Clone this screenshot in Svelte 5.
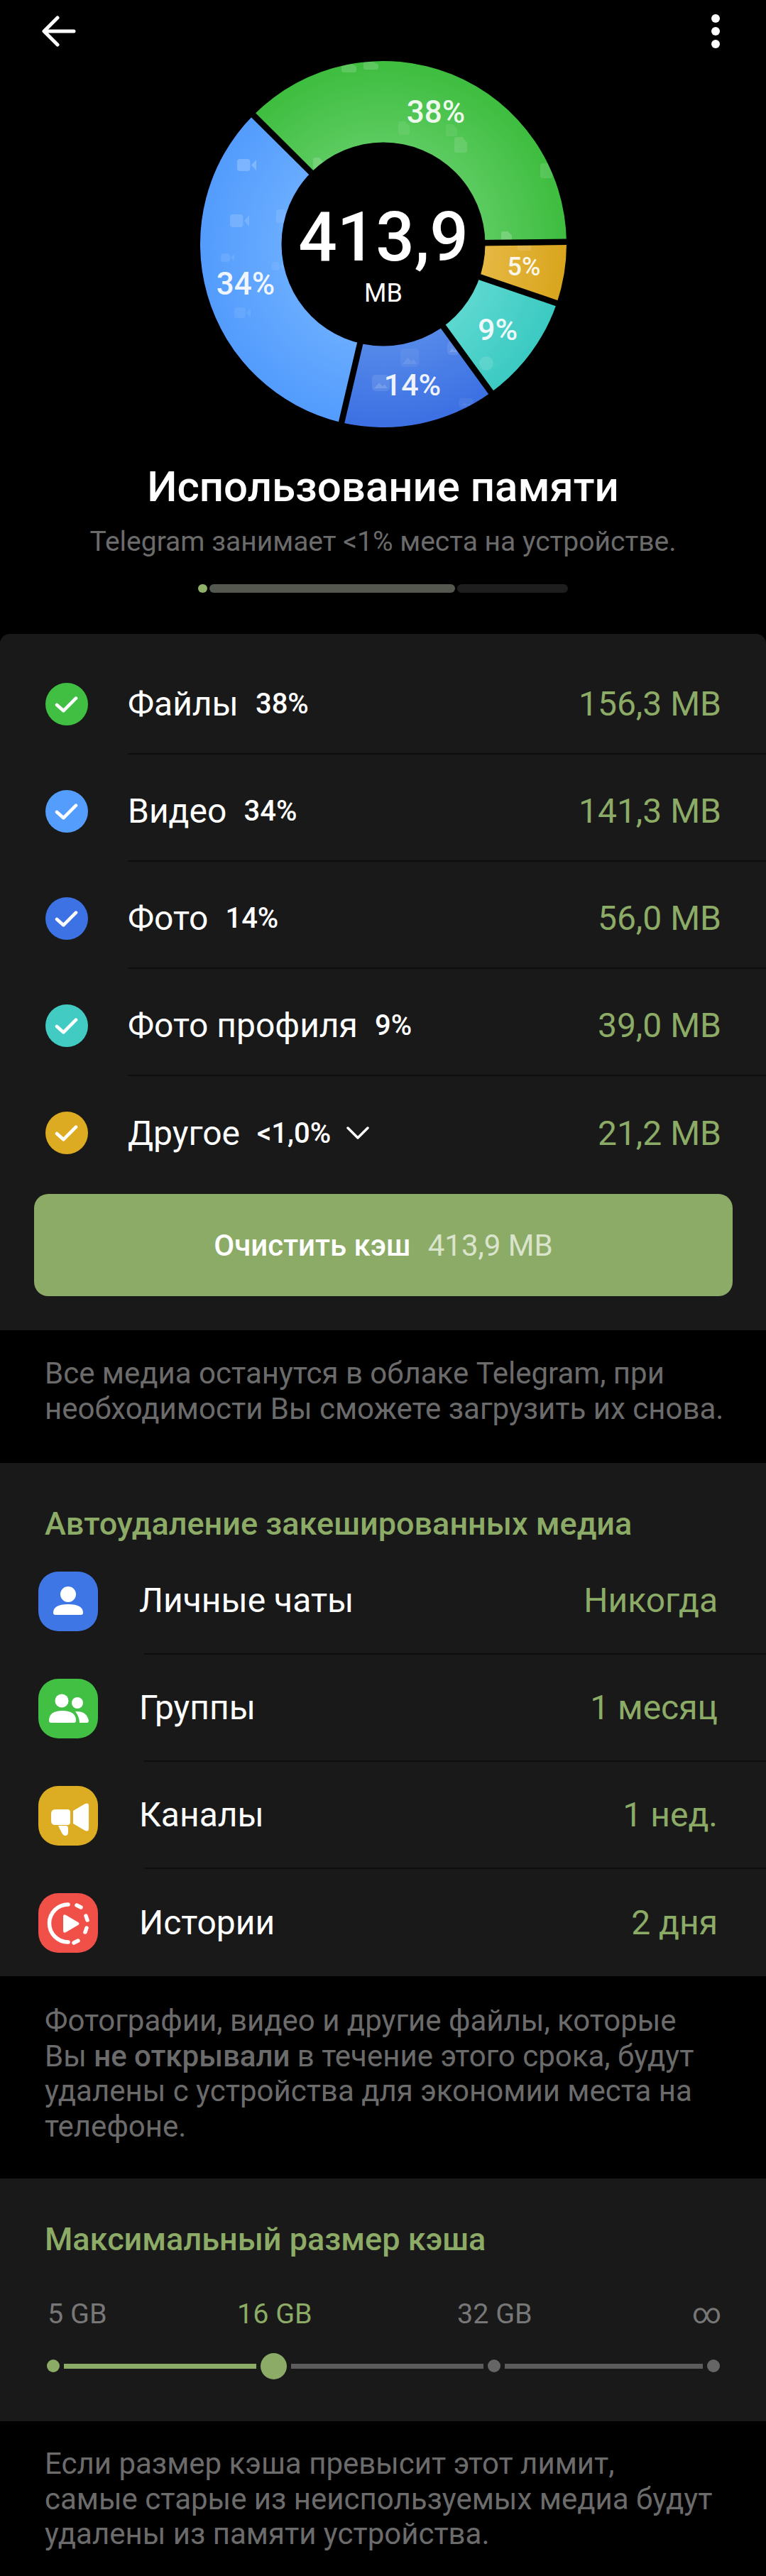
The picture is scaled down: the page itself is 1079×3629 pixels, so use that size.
<script>
  const cx = 258, cy = 258, R = 258, r = 143.5

  function pt(deg, rad) {
    const a = (deg - 90) * Math.PI / 180
    return [cx + rad * Math.cos(a), cy + rad * Math.sin(a)]
  }

  function sector(from, to) {
    const [x1, y1] = pt(from, R)
    const [x2, y2] = pt(to, R)
    const big = to - from > 180 ? 1 : 0
    return `M${cx} ${cy}L${x1} ${y1}A${R} ${R} 0 ${big} 1 ${x2} ${y2}Z`
  }

  // angles read off the reference, clockwise from 12 o'clock
  const segments = [
    { id: 'green', from: -45.2, to: 89.3 },
    { id: 'gold', from: 89.3, to: 108.8 },
    { id: 'teal', from: 108.8, to: 144 },
    { id: 'photo', from: 144, to: 193.2 },
    { id: 'blue', from: 193.2, to: 314.8 }
  ]

  const gradients = [
    { id: 'green', inner: '#5ccb60', outer: '#3ebd3f' },
    { id: 'gold', inner: '#e6b944', outer: '#d9a51d' },
    { id: 'teal', inner: '#5dd8d0', outer: '#3bcac2' },
    { id: 'photo', inner: '#5589e9', outer: '#3c70e3' },
    { id: 'blue', inner: '#69acff', outer: '#539cfd' }
  ]

  const labels = [
    { text: '38%', x: 332, y: 75, size: 44 },
    { text: '5%', x: 456, y: 292, size: 36 },
    { text: '9%', x: 419, y: 382, size: 43 },
    { text: '14%', x: 299, y: 460, size: 43 },
    { text: '34%', x: 64, y: 317, size: 44 }
  ]

  // faint watermarks: x, y, width, height, opacity
  const videos = [
    [52, 138, 27, 17, 0.22], [42, 216, 27, 18, 0.16], [29, 271, 19, 12, 0.1],
    [48, 347, 23, 15, 0.08], [107, 209, 20, 19, 0.1], [101, 283, 16, 12, 0.08]
  ]
  const docs = [
    [358, 107, 18, 22, 0.12], [424, 240, 15, 16, 0.2], [159, 136, 14, 16, 0.16],
    [479, 144, 17, 21, 0.12], [279, 85, 16, 19, 0.08], [346, 89, 16, 17, 0.07],
    [199, 3, 21, 13, 0.16], [230, 1, 21, 11, 0.16]
  ]
  const photos = [
    [282, 405, 26, 26, 0.06], [242, 442, 25, 23, 0.1], [348, 395, 17, 19, 0.1], [364, 475, 21, 14, 0.06]
  ]

  const usage = [
    { name: 'Файлы', pct: '38%', size: '156,3 MB', color: '#41bf43' },
    { name: 'Видео', pct: '34%', size: '141,3 MB', color: '#549dfd' },
    { name: 'Фото', pct: '14%', size: '56,0 MB', color: '#3d72e4' },
    { name: 'Фото профиля', pct: '9%', size: '39,0 MB', color: '#41cbc3' },
    { name: 'Другое', pct: '<1,0%', size: '21,2 MB', color: '#dcab22', more: true }
  ]

  const autoDelete = [
    { name: 'Личные чаты', value: 'Никогда', color: '#3e76e6', icon: 'user' },
    { name: 'Группы', value: '1 месяц', color: '#41c044', icon: 'group' },
    { name: 'Каналы', value: '1 нед.', color: '#dcac22', icon: 'channel' },
    { name: 'Истории', value: '2 дня', color: '#f15048', icon: 'story' }
  ]
</script>

<div class="page">
  <header class="top">
    <svg class="back" viewBox="0 0 48 44" width="48" height="44">
      <path d="M45 22H4M22 3 3 22l19 19" fill="none" stroke="#fff" stroke-width="5" stroke-linecap="round" stroke-linejoin="round" />
    </svg>
    <div class="dots"><i></i><i></i><i></i></div>
  </header>

  <svg class="donut" viewBox="0 0 516 516" width="516" height="516">
    <defs>
      {#each gradients as g}
        <radialGradient id={g.id} gradientUnits="userSpaceOnUse" cx="258" cy="258" r="258">
          <stop offset="0.55" stop-color={g.inner} />
          <stop offset="1" stop-color={g.outer} />
        </radialGradient>
      {/each}
      <clipPath id="ring"><circle cx="258" cy="258" r="258" /></clipPath>
    </defs>
    {#each segments as s}
      <path d={sector(s.from, s.to)} fill="url(#{s.id})" />
    {/each}

    <g fill="#fff" clip-path="url(#ring)">
      {#each videos as [x, y, w, h, o]}
        <g opacity={o}>
          <rect {x} {y} width={w * 0.68} height={h} rx="4" />
          <path d="M{x + w * 0.74} {y + h * 0.5}L{x + w} {y + 1}V{y + h - 1}Z" />
        </g>
      {/each}
      {#each docs as [x, y, w, h, o]}
        <path opacity={o} d="M{x + 3} {y}H{x + w * 0.62}L{x + w} {y + h * 0.35}V{y + h - 3}Q{x + w} {y + h} {x + w - 3} {y + h}H{x + 3}Q{x} {y + h} {x} {y + h - 3}V{y + 3}Q{x} {y} {x + 3} {y}Z" />
      {/each}
      {#each photos as [x, y, w, h, o]}
        <rect opacity={o} {x} {y} width={w} height={h} rx="5" />
        <path opacity={o * 1.6} d="M{x + 3} {y + h - 4}L{x + w * 0.4} {y + h * 0.5}L{x + w * 0.6} {y + h * 0.7}L{x + w * 0.72} {y + h * 0.58}L{x + w - 3} {y + h - 4}Z" />
      {/each}
      <g opacity="0.12">
        <circle cx="403" cy="426" r="10" />
        <rect x="447" y="259" width="19" height="8" rx="2" />
      </g>
    </g>

    <circle cx={cx} cy={cy} r={r} fill="#000" />
    {#each segments as s}
      <line x1={pt(s.from, r - 10)[0]} y1={pt(s.from, r - 10)[1]} x2={pt(s.from, R + 4)[0]} y2={pt(s.from, R + 4)[1]} stroke="#000" stroke-width="8.5" />
    {/each}

    {#each labels as l}
      <text class="pct" x={l.x} y={l.y} font-size={l.size} text-anchor="middle">{l.text}</text>
    {/each}
    <text class="total" x="258" y="281" text-anchor="middle">413,9</text>
    <text class="unit" x="258" y="339" text-anchor="middle">MB</text>
  </svg>

  <h1>Использование памяти</h1>
  <p class="sub">Telegram занимает &lt;1% места на устройстве.</p>

  <div class="bar">
    <span class="b1"></span>
    <span class="b2"></span>
    <span class="b3"></span>
  </div>

  <section class="card first">
    {#each usage as u}
      <div class="row">
        <span class="check" style="background: {u.color}">
          <svg viewBox="0 0 36 28" width="36" height="28">
            <path d="M3 15l10 9L32 5" fill="none" stroke="#fff" stroke-width="5" stroke-linecap="round" stroke-linejoin="round" />
          </svg>
        </span>
        <div class="row-body">
          <span class="name">{u.name}</span>
          <span class="pct-small">{u.pct}</span>
          {#if u.more}
            <svg class="chev" viewBox="0 0 32 18" width="32" height="18">
              <path d="M2 2l14 14L30 2" fill="none" stroke="#fff" stroke-width="3.5" stroke-linecap="round" stroke-linejoin="round" />
            </svg>
          {/if}
          <span class="size">{u.size}</span>
        </div>
      </div>
    {/each}
    <button class="clear">Очистить кэш <span>413,9 MB</span></button>
  </section>

  <p class="note note-a">Все медиа останутся в облаке Telegram, при необходимости Вы сможете загрузить их снова.</p>

  <section class="card second">
    <h2>Автоудаление закешированных медиа</h2>
    <div class="auto-list">
      {#each autoDelete as a}
        <div class="auto">
          <span class="tile" style="background: {a.color}">
            <svg viewBox="0 0 84 84" width="84" height="84" fill="#fff">
              {#if a.icon === 'user'}
                <circle cx="42" cy="32" r="11" />
                <path d="M21 58q0-12 21-12t21 12q0 3-3 3H24q-3 0-3-3z" />
              {:else if a.icon === 'group'}
                <circle cx="33" cy="31" r="9.5" />
                <circle cx="55" cy="34" r="8" />
                <path d="M15 59q0-14 19-14t19 14q0 3-3 3H18q-3 0-3-3z" />
                <path d="M52 46q16-1 19 13q0 3-3 3H58q0-8-6-16z" />
              {:else if a.icon === 'channel'}
                <path d="M18 39q0-6 6-6h17q4 0 4 4v14q0 4-4 4H24q-6 0-6-6z" />
                <path d="M49 35l17-10q5-2 5 3v32q0 5-5 3L49 53z" />
                <path d="M28 56h11q3 0 3 4v5q0 5-4 5-3 0-5-4z" />
              {:else}
                <path d="M42 16A26 26 0 0 0 42 69" fill="none" stroke="#fff" stroke-width="5.5" stroke-linecap="round" />
                <path d="M54 17l6 3M67 32l2 6M68 49l-2 6M56 67l-6 3" fill="none" stroke="#fff" stroke-width="5.5" stroke-linecap="round" />
                <path d="M35 33q0-4 4-2l17 10q3 2 0 4L39 55q-4 2-4-2z" />
              {/if}
            </svg>
          </span>
          <div class="auto-body">
            <span class="name">{a.name}</span>
            <span class="size">{a.value}</span>
          </div>
        </div>
      {/each}
    </div>
  </section>

  <p class="note note-b">Фотографии, видео и другие файлы, которые<br />Вы <b>не открывали</b> в течение этого срока, будут удалены с устройства для экономии места на телефоне.</p>

  <section class="card third">
    <h2>Максимальный размер кэша</h2>
    <div class="marks">
      <span>5 GB</span>
      <span class="on">16 GB</span>
      <span>32 GB</span>
      <span class="inf">∞</span>
    </div>
    <div class="slider">
      <i class="dot on"></i>
      <i class="track on"></i>
      <i class="thumb"></i>
      <i class="track"></i>
      <i class="dot"></i>
      <i class="track last"></i>
      <i class="dot"></i>
    </div>
  </section>

  <p class="note note-c">Если размер кэша превысит этот лимит,<br />самые старые из неиспользуемых медиа будут удалены из памяти устройства.</p>
</div>

<style>
  :global(body) {
    margin: 0;
    background: #000;
  }
  .page {
    width: 1079px;
    height: 3629px;
    overflow: hidden;
    background: #000;
    color: #fff;
    font-family: Roboto, "Noto Sans", sans-serif;
  }
  .top {
    display: flex;
    justify-content: space-between;
    align-items: center;
    height: 88px;
    padding: 0 65px 0 59px;
  }
  .back { display: block; }
  .dots {
    display: flex;
    flex-direction: column;
    gap: 6px;
  }
  .dots i {
    width: 12px;
    height: 12px;
    border-radius: 50%;
    background: #fff;
  }
  .donut {
    display: block;
    margin: -2px auto 0;
  }
  .pct {
    fill: #fff;
    fill-opacity: 0.92;
    font-weight: 500;
    dominant-baseline: middle;
  }
  .total {
    fill: #fff;
    font-size: 96px;
    font-weight: 500;
  }
  .unit {
    fill: #fff;
    font-size: 36px;
  }
  h1 {
    margin: 51px 0 0;
    font-size: 60px;
    line-height: 66px;
    font-weight: 500;
    text-align: center;
  }
  .sub {
    margin: 20px 0 0;
    font-size: 39px;
    line-height: 48px;
    color: #6b6b6b;
    text-align: center;
  }
  .bar {
    display: flex;
    gap: 3px;
    width: 521px;
    margin: 36px auto 0;
  }
  .bar span {
    height: 12px;
    border-radius: 6px;
  }
  .b1 { width: 13px; background: #8fb069; }
  .b2 { width: 346px; background: #55584f; }
  .b3 { flex: 1; background: #1e1e1e; }
  .card {
    background: #191919;
  }
  .first {
    margin-top: 58px;
    padding-top: 18.5px;
    height: 981px;
    box-sizing: border-box;
    border-radius: 14px 14px 0 0;
  }
  .row {
    display: flex;
    align-items: center;
    height: 151px;
    padding-left: 64px;
  }
  .check {
    flex: none;
    display: flex;
    align-items: center;
    justify-content: center;
    width: 60px;
    height: 60px;
    margin-top: 10px;
    border-radius: 50%;
  }
  .check svg {
    width: 34px;
    height: 26px;
  }
  .row-body {
    flex: 1;
    display: flex;
    align-items: center;
    height: 100%;
    margin-left: 56px;
    padding: 10px 63px 0 0;
    border-bottom: 2px solid #0e0e0e;
    box-sizing: border-box;
  }
  .row:nth-child(5) .row-body { border-bottom: 0; }
  .name {
    font-size: 48px;
    color: #fff;
  }
  .pct-small {
    margin-left: 24px;
    font-size: 40px;
    font-weight: 500;
  }
  .chev {
    margin-left: 22px;
  }
  .size {
    margin-left: auto;
    font-size: 48px;
    color: #8cab66;
  }
  .clear {
    display: block;
    width: 984px;
    height: 144px;
    margin: 15.5px 48px 0;
    border: 0;
    border-radius: 20px;
    background: #8cab66;
    color: #fff;
    font-family: inherit;
    font-size: 42px;
    font-weight: 500;
    text-align: center;
  }
  .clear span {
    margin-left: 14px;
    color: #eef3e6;
    font-weight: 400;
    opacity: 0.8;
  }
  .note {
    margin: 0;
    padding: 0 45px 0 63px;
    font-size: 42px;
    line-height: 49.5px;
    color: #6b6b6b;
  }
  .note b {
    font-weight: 500;
  }
  .note-a { padding-top: 36px; height: 187px; box-sizing: border-box; }
  h2 {
    margin: 0;
    font-size: 45px;
    line-height: 50px;
    font-weight: 500;
    color: #8cab66;
  }
  .card > h2 {
    padding: 61px 63px 0;
  }
  .second { height: 723px; }
  .auto-list { margin-top: 8px; }
  .auto {
    display: flex;
    align-items: center;
    height: 151px;
    padding-left: 54px;
  }
  .tile {
    flex: none;
    width: 84px;
    height: 84px;
    border-radius: 28px;
  }
  .tile svg { display: block; }
  .auto-body {
    flex: 1;
    display: flex;
    align-items: center;
    height: 100%;
    margin-left: 65px;
    padding-right: 68px;
    border-bottom: 2px solid #0e0e0e;
    box-sizing: border-box;
  }
  .auto-body .name { margin-left: -7px; }
  .auto:last-child .auto-body { border-bottom: 0; }
  .note-b { padding-top: 38px; height: 285px; box-sizing: border-box; }
  .third {
    height: 342px;
  }
  .marks {
    display: grid;
    grid-template-columns: 267px 310px 331px 1fr;
    margin: 58px 65px 0 67px;
    font-size: 39.5px;
    line-height: 44px;
    color: #777;
  }
  .marks .on { color: #8cab66; }
  .marks .inf { text-align: right; font-size: 40px; }
  .slider {
    display: flex;
    align-items: center;
    gap: 6px;
    height: 40px;
    margin: 31px 65px 0 66px;
  }
  .dot {
    flex: none;
    width: 18px;
    height: 18px;
    border-radius: 50%;
    background: #666;
  }
  .dot.on { background: #8cab66; }
  .thumb {
    flex: none;
    width: 37px;
    height: 37px;
    border-radius: 50%;
    background: #8cab66;
  }
  .track {
    flex: none;
    width: 271px;
    height: 7px;
    background: #5c5c5c;
  }
  .track.last { flex: 1; }
  .track.on { background: #8cab66; }
  .note-c { padding-top: 35px; }
</style>
